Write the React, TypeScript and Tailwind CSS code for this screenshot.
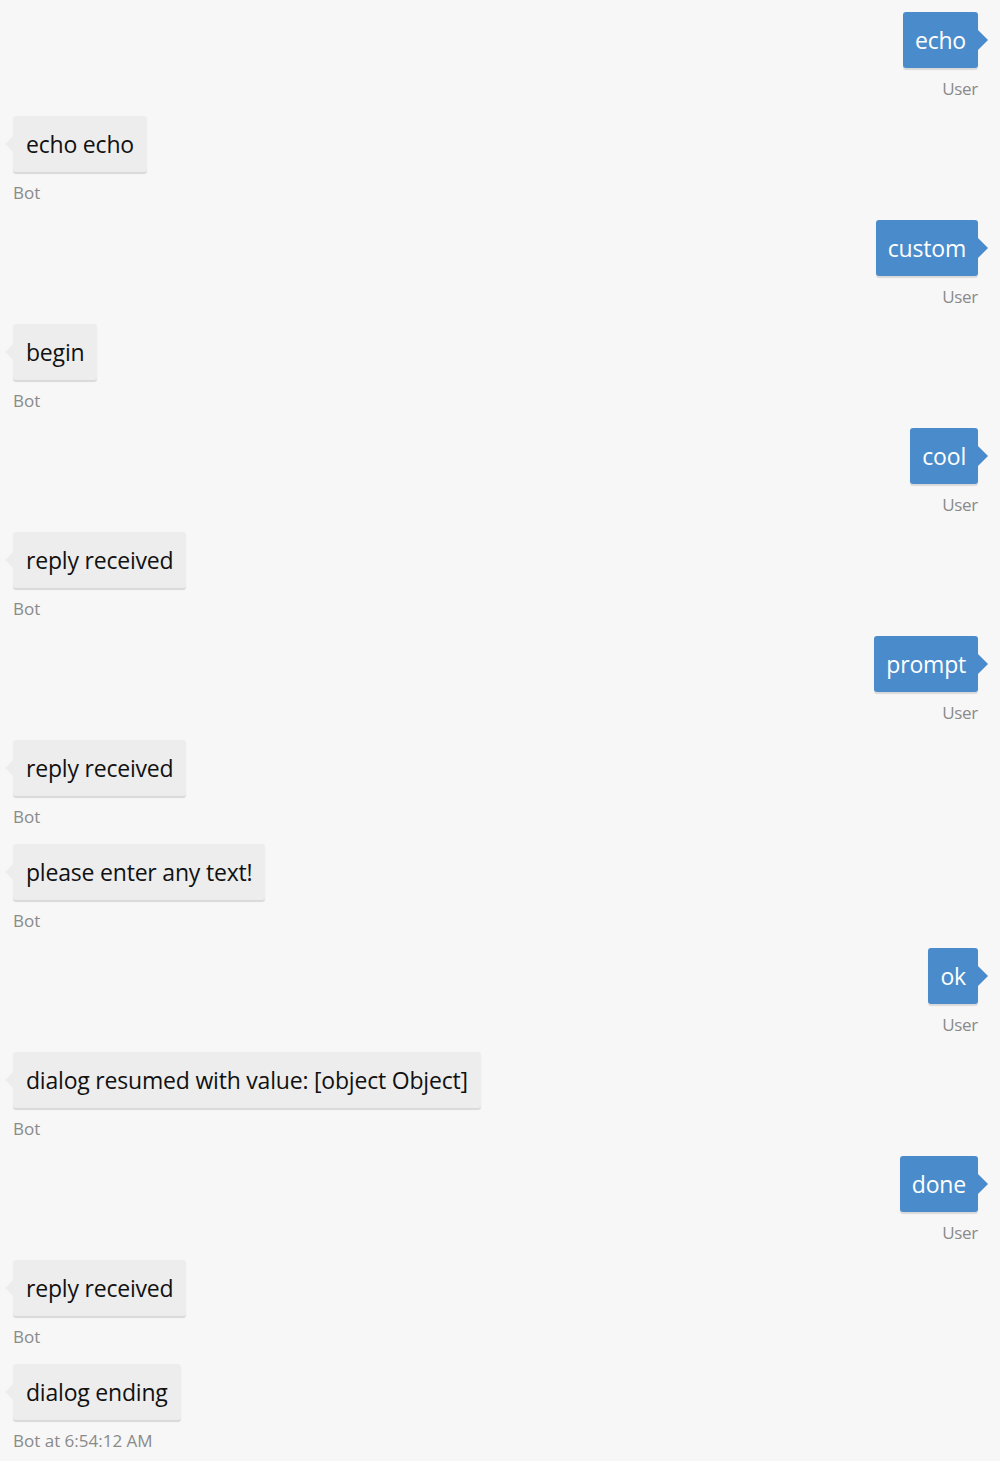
import React from "react";

type Msg = { from: "user" | "bot"; text: string; label?: string };

const messages: Msg[] = [
	{ from: "user", text: "echo" },
	{ from: "bot", text: "echo echo" },
	{ from: "user", text: "custom" },
	{ from: "bot", text: "begin" },
	{ from: "user", text: "cool" },
	{ from: "bot", text: "reply received" },
	{ from: "user", text: "prompt" },
	{ from: "bot", text: "reply received" },
	{ from: "bot", text: "please enter any text!" },
	{ from: "user", text: "ok" },
	{ from: "bot", text: "dialog resumed with value: [object Object]" },
	{ from: "user", text: "done" },
	{ from: "bot", text: "reply received" },
	{ from: "bot", text: "dialog ending", label: "Bot at 6:54:12 AM" },
];

const font = { fontFamily: '"Open Sans", "Noto Sans", sans-serif' };

function UserMessage({ text }: { text: string }) {
	return (
		<div className="flex flex-col items-end pr-[22px]">
			<div className="relative h-14 flex items-center px-[12px] bg-[#4a8ccb] rounded-[3px] shadow-[0_2px_1px_rgba(0,0,0,0.12)]">
				<span className="text-[23px] text-white tracking-[-0.2px]">{text}</span>
				{/* little arrow on the right side */}
				<div className="absolute right-[-10px] top-[18px] w-0 h-0 border-y-[10px] border-y-transparent border-l-[10px] border-l-[#4a8ccb]" />
			</div>
			<div className="mt-[11px] h-5 leading-5 text-[17px] text-[#8a8a8a] tracking-[-0.3px]">User</div>
		</div>
	);
}

function BotMessage({ text, label }: { text: string; label?: string }) {
	return (
		<div className="flex flex-col items-start pl-[13px]">
			<div className="relative h-14 flex items-center px-[13px] bg-[#ededed] rounded-[3px] shadow-[0_2px_1px_rgba(0,0,0,0.12)]">
				<span className="text-[23px] text-[#111] tracking-[-0.2px]">{text}</span>
				<div className="absolute left-[-8px] top-[20px] w-0 h-0 border-y-[8px] border-y-transparent border-r-[8px] border-r-[#ededed]" />
			</div>
			<div className="mt-[11px] h-5 leading-5 text-[17px] text-[#8a8a8a]">{label ?? "Bot"}</div>
		</div>
	);
}

export default function App() {
	return (
		<div className="w-[1000px] h-[1461px] bg-[#f7f7f7] pt-3 overflow-hidden" style={font}>
			<div className="flex flex-col gap-[17px]">
				{messages.map((m, i) =>
					m.from === "user" ? (
						<UserMessage key={i} text={m.text} />
					) : (
						<BotMessage key={i} text={m.text} label={m.label} />
					),
				)}
			</div>
		</div>
	);
}
